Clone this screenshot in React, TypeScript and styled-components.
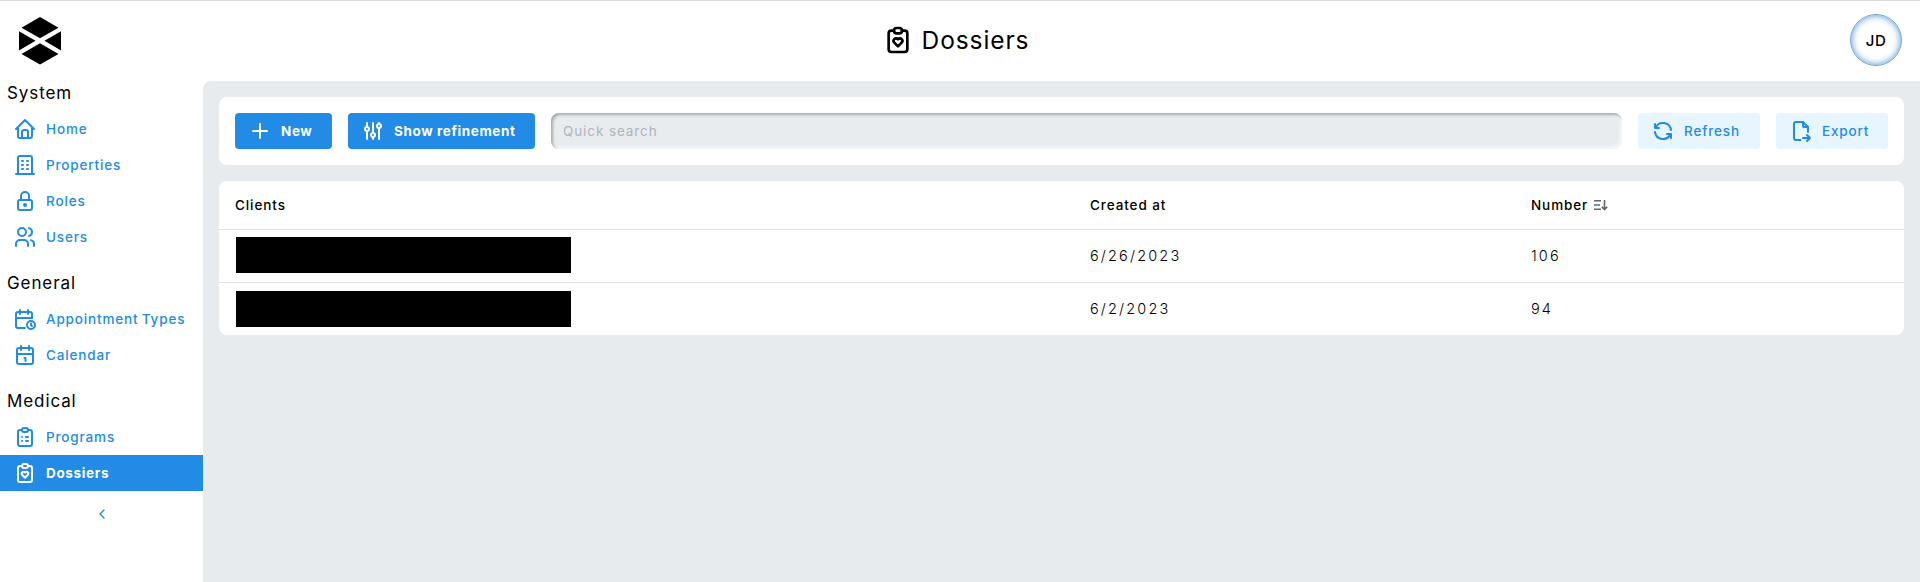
import React from "react";
import styled, { createGlobalStyle, css } from "styled-components";
import {
  TbHome, TbBuilding, TbLock, TbUsers, TbCalendarTime, TbClipboardList, TbClipboardHeart,
  TbChevronLeft, TbPlus, TbAdjustments, TbRefresh, TbFileExport,
} from "react-icons/tb";

const Global = createGlobalStyle`
  * { box-sizing: border-box; }
  body { margin: 0; background: #fff; color: #000; font-family: Inter, "Liberation Sans", sans-serif; font-size: 13.5px; }
  button, input { font: inherit; }
`;

const Page = styled.div`
  display: flex;
  flex-direction: column;
  height: 582px;
  overflow: hidden;
  border-top: 1px solid #d9d9d9;
`;
const Header = styled.header`
  display: grid;
  grid-template-columns: 1fr auto 1fr;
  align-items: center;
  height: 80px;
  padding: 0 18px 2px 19px;
`;
const Title = styled.h1`
  display: flex;
  align-items: center;
  gap: 8px;
  margin: 0;
  padding-right: 10px;
  font-size: 24.5px;
  font-weight: 400;
  letter-spacing: 0.9px;
`;
const Avatar = styled.div`
  justify-self: end;
  display: grid;
  place-items: center;
  width: 52px;
  height: 52px;
  border-radius: 50%;
  border: 1px solid #6fa5d8;
  box-shadow: inset 0 0 7px #4a90d9;
  font-size: 15px;
  font-weight: 500;
  letter-spacing: 0.5px;
`;
const Body = styled.div`
  display: flex;
  flex: 1;
`;
const Sidebar = styled.nav`
  width: 203px;
  flex: none;
`;
const Group = styled.section`
  & + & { margin-top: 16px; }
`;
const GroupTitle = styled.h2`
  margin: 0;
  padding: 0 0 5px 7px;
  font-size: 17px;
  line-height: 25px;
  font-weight: 400;
  letter-spacing: 0.9px;
`;
const Item = styled.a<{ $active?: boolean }>`
  display: flex;
  align-items: center;
  gap: 9px;
  height: 36px;
  padding-left: 13px;
  color: #228be6;
  font-weight: 500;
  letter-spacing: 0.85px;
  word-spacing: -1.2px;
  ${(p) => p.$active && css`background: #228be6; color: #fff; font-weight: 700; letter-spacing: 0.65px;`}
`;
const Collapse = styled.div`
  display: flex;
  justify-content: center;
  padding-top: 15px;
  color: #228be6;
`;
const Main = styled.main`
  flex: 1;
  display: flex;
  flex-direction: column;
  gap: 16px;
  padding: 16px;
  background: #e7ebee;
  border-top-left-radius: 8px;
`;
const Toolbar = styled.div`
  display: flex;
  gap: 16px;
  padding: 16px;
  background: #fff;
  border-radius: 8px;
`;
const Button = styled.button<{ $light?: boolean; $width: number }>`
  display: flex;
  align-items: center;
  gap: 9px;
  flex: none;
  width: ${(p) => p.$width}px;
  height: 36px;
  padding: 0 0 0 13px;
  border: 0;
  border-radius: 4px;
  color: ${(p) => (p.$light ? "#228be6" : "#fff")};
  background: ${(p) => (p.$light ? "#e7f5ff" : "#228be6")};
  font-weight: ${(p) => (p.$light ? 500 : 700)};
  letter-spacing: ${(p) => (p.$light ? 0.85 : 0.6)}px;
  white-space: nowrap;
`;
const Search = styled.input`
  flex: 1;
  min-width: 0;
  height: 36px;
  padding: 0 12px;
  border: 0;
  border-radius: 8px;
  background: #e9ecef;
  box-shadow: inset 2px 2px 3px #a3adb7, inset -2px -2px 3px #f8f9fa;
  letter-spacing: 0.9px;
  &::placeholder { color: #adb5bd; opacity: 1; }
`;
const Table = styled.div`
  background: #fff;
  border-radius: 8px;
`;
const Cell = styled.div`
  display: flex;
  align-items: center;
  gap: 6px;
  padding: 0 0 2px 16px;
`;
const Row = styled.div<{ $head?: boolean }>`
  display: grid;
  grid-template-columns: 855px 441px 1fr;
  align-items: center;
  height: ${(p) => (p.$head ? 48 : 52)}px;
  box-sizing: content-box;
  font-size: ${(p) => (p.$head ? 13.5 : 14.5)}px;
  font-weight: ${(p) => (p.$head ? 500 : 300)};
  letter-spacing: ${(p) => (p.$head ? 0.9 : 2.15)}px;
  & + & { border-top: 1px solid #dee2e6; }
  ${(p) => p.$head && css`${Cell} { padding-bottom: 0; }`}
`;
const Redacted = styled.span<{ $low?: boolean }>`
  width: 335px;
  height: 36px;
  margin: ${(p) => (p.$low ? "2px 0 0 1px" : "0 0 0 1px")};
  background: #000;
`;

const CalendarDay = () => (
  <svg width="24" height="24" viewBox="0 0 24 24" fill="none" stroke="currentColor" strokeWidth="2" strokeLinecap="round" strokeLinejoin="round">
    <rect x="4" y="5" width="16" height="16" rx="2" />
    <path d="M16 3v4M8 3v4M4 11h16M11.5 15h1M12.5 15v3" />
  </svg>
);
const LogoSvg = styled.svg`
  margin-top: 2px;
`;
const Logo = () => (
  <LogoSvg width="42" height="48" viewBox="0 0 42 48">
    <path d="M21 0 39.5 10.7 21 21.2 2.5 10.7ZM21 26.2 39.5 36.9 21 47.6 2.5 36.9ZM0 14.2 16.5 23.7 0 33.6ZM42 14.2 25.5 23.7 42 33.6Z" />
  </LogoSvg>
);
const SortIcon = () => (
  <svg width="14" height="12" viewBox="0 0 14 12" fill="none" stroke="#666" strokeWidth="1.6">
    <path d="M0 1.7h7M0 6h6M0 10.3h7M10.5 1v9M7.8 7.8l2.7 2.7 2.7-2.7" />
  </svg>
);

const groups = [
  { title: "System", items: [["Home", TbHome], ["Properties", TbBuilding], ["Roles", TbLock], ["Users", TbUsers]] },
  { title: "General", items: [["Appointment Types", TbCalendarTime], ["Calendar", CalendarDay]] },
  { title: "Medical", items: [["Programs", TbClipboardList], ["Dossiers", TbClipboardHeart]] },
] as { title: string; items: [string, React.ComponentType<{ size?: number }>][] }[];

const rows = [["6/26/2023", "106"], ["6/2/2023", "94"]];

export default function App() {
  return (
    <Page>
      <Global />
      <Header>
        <Logo />
        <Title><TbClipboardHeart size={32} />Dossiers</Title>
        <Avatar>JD</Avatar>
      </Header>
      <Body>
        <Sidebar>
          {groups.map((g) => (
            <Group key={g.title}>
              <GroupTitle>{g.title}</GroupTitle>
              {g.items.map(([label, Icon]) => (
                <Item key={label} $active={label === "Dossiers"}><Icon size={24} />{label}</Item>
              ))}
            </Group>
          ))}
          <Collapse><TbChevronLeft size={16} /></Collapse>
        </Sidebar>
        <Main>
          <Toolbar>
            <Button $width={97}><TbPlus size={24} />New</Button>
            <Button $width={187}><TbAdjustments size={24} />Show refinement</Button>
            <Search placeholder="Quick search" />
            <Button $light $width={122}><TbRefresh size={24} />Refresh</Button>
            <Button $light $width={112}><TbFileExport size={24} />Export</Button>
          </Toolbar>
          <Table>
            <Row $head><Cell>Clients</Cell><Cell>Created at</Cell><Cell>Number<SortIcon /></Cell></Row>
            {rows.map(([date, number], i) => (
              <Row key={number}><Cell><Redacted $low={i > 0} /></Cell><Cell>{date}</Cell><Cell>{number}</Cell></Row>
            ))}
          </Table>
        </Main>
      </Body>
    </Page>
  );
}
